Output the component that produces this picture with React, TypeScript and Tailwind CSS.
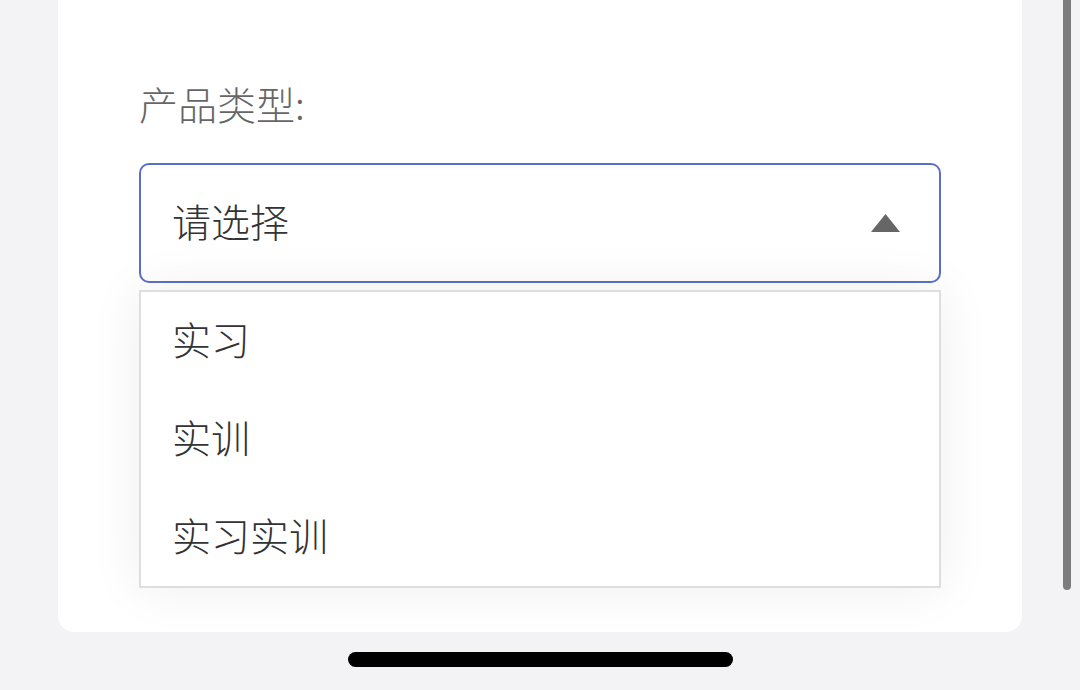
import React from 'react';

const options = ['实习', '实训', '实习实训'];

const ProductTypeSelect: React.FC = () => {
  return (
    <div className="relative mt-[37px]">
      <div className="flex h-[120px] w-full items-center justify-between rounded-[10px] border-2 border-[#5c6fc8] bg-white pl-[31px] pr-[39px]">
        <span className="mb-[6px] text-[39px] font-light leading-none text-[#333]">请选择</span>
        <svg width="29" height="18" viewBox="0 0 29 18">
          <polygon points="14.5,0 29,18 0,18" fill="#666" />
        </svg>
      </div>
      <ul className="absolute left-0 top-[127px] z-10 w-[802px] border-2 border-[#dedede] bg-white shadow-[0_0_50px_rgba(0,0,0,0.07)]">
        {options.map((o) => (
          <li key={o} className="flex h-[98px] items-center pb-[6px] pl-[31px] text-[39px] font-light leading-none text-[#333]">
            {o}
          </li>
        ))}
      </ul>
    </div>
  );
};

export default function App() {
  return (
    <div
      className="relative flex h-[690px] w-[1080px] flex-col items-center overflow-hidden bg-[#f3f3f5]"
      style={{ fontFamily: '"Noto Sans CJK SC", "Noto Sans", sans-serif' }}
    >
      <div className="h-[632px] w-[964px] rounded-b-[16px] bg-white px-[81px] pt-[80px]">
        <div className="text-[39px] font-light leading-[46px] text-[#666]">产品类型:</div>
        <ProductTypeSelect />
      </div>
      <div className="mt-[20px] h-[15px] w-[385px] rounded-full bg-black" />
      <div className="absolute right-[9px] top-0 h-[590px] w-[8px] rounded-b-full bg-[#7c7c7c]" />
    </div>
  );
}
